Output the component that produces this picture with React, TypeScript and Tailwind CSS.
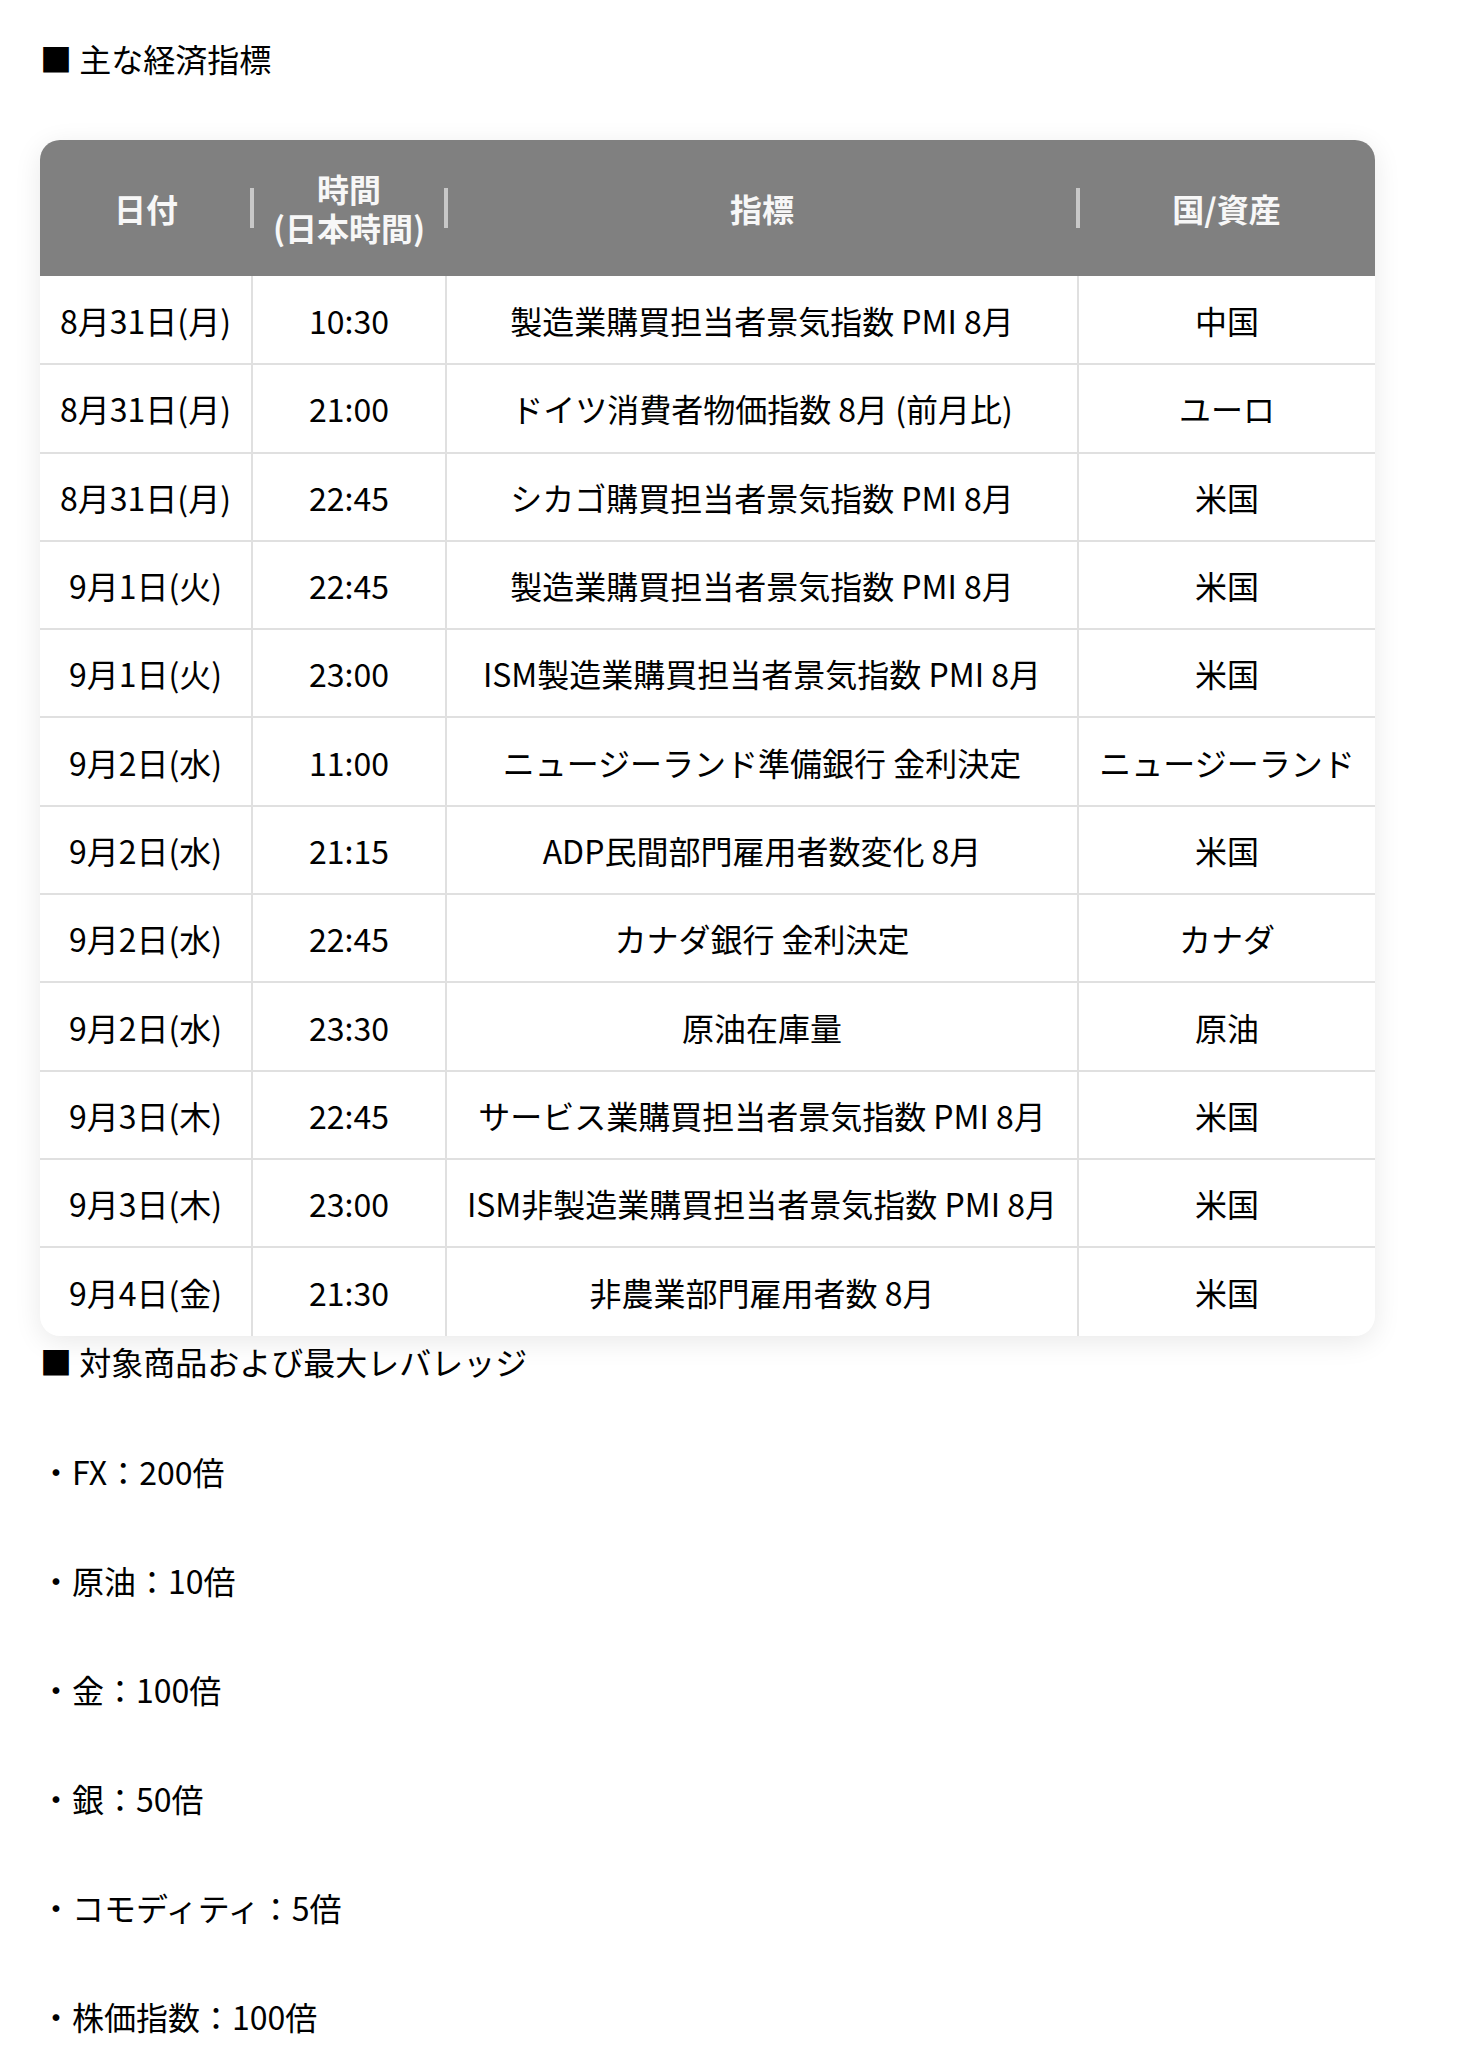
import React from "react";

const rows = [
  ["8月31日(月)", "10:30", "製造業購買担当者景気指数 PMI 8月", "中国"],
  ["8月31日(月)", "21:00", "ドイツ消費者物価指数 8月 (前月比)", "ユーロ"],
  ["8月31日(月)", "22:45", "シカゴ購買担当者景気指数 PMI 8月", "米国"],
  ["9月1日(火)", "22:45", "製造業購買担当者景気指数 PMI 8月", "米国"],
  ["9月1日(火)", "23:00", "ISM製造業購買担当者景気指数 PMI 8月", "米国"],
  ["9月2日(水)", "11:00", "ニュージーランド準備銀行 金利決定", "ニュージーランド"],
  ["9月2日(水)", "21:15", "ADP民間部門雇用者数変化 8月", "米国"],
  ["9月2日(水)", "22:45", "カナダ銀行 金利決定", "カナダ"],
  ["9月2日(水)", "23:30", "原油在庫量", "原油"],
  ["9月3日(木)", "22:45", "サービス業購買担当者景気指数 PMI 8月", "米国"],
  ["9月3日(木)", "23:00", "ISM非製造業購買担当者景気指数 PMI 8月", "米国"],
  ["9月4日(金)", "21:30", "非農業部門雇用者数 8月", "米国"],
];

const items = ["FX：200倍", "原油：10倍", "金：100倍", "銀：50倍", "コモディティ：5倍", "株価指数：100倍"];

function HeadCell({ children, bar }: { children: React.ReactNode; bar?: boolean }) {
  return (
    <th className="relative h-[136px] p-0 text-center align-middle font-bold text-[32px] leading-[39px] text-[#f7f7f7]">
      {children}
      {bar && (
        <span className="absolute right-0 top-1/2 h-[40px] w-[4px] -translate-y-1/2 translate-x-1/2 bg-[#c8c8c8]" />
      )}
    </th>
  );
}

export default function App() {
  return (
    <div
      className="min-h-[2072px] bg-white pl-[40px] pt-[34px] text-black"
      style={{ fontFamily: '"Noto Sans CJK JP", "Noto Sans", sans-serif' }}
    >
      <p className="text-[32px] leading-[48px]">■ 主な経済指標</p>

      <div className="mt-[58px] w-[1335px] overflow-hidden rounded-[20px] bg-white shadow-[0_6px_28px_rgba(0,0,0,0.09)]">
        <table className="w-full table-fixed border-collapse">
          <colgroup>
            <col className="w-[212px]" />
            <col className="w-[194px]" />
            <col className="w-[632px]" />
            <col />
          </colgroup>
          <thead className="bg-[#808080]">
            <tr>
              <HeadCell bar>日付</HeadCell>
              <HeadCell bar>
                時間
                <br />
                (日本時間)
              </HeadCell>
              <HeadCell bar>指標</HeadCell>
              <HeadCell>国/資産</HeadCell>
            </tr>
          </thead>
          <tbody>
            {rows.map((r, i) => (
              <tr key={i} className={i < rows.length - 1 ? "border-b-2 border-[#e0e0e0]" : ""}>
                {r.map((c, j) => (
                  <td
                    key={j}
                    className={
                      "h-[88.3px] p-0 text-center align-middle text-[32px] leading-[40px] " +
                      (j < 3 ? "border-r-2 border-[#e0e0e0]" : "")
                    }
                  >
                    {c}
                  </td>
                ))}
              </tr>
            ))}
          </tbody>
        </table>
      </div>

      <p className="mt-[1px] text-[32px] leading-[48px]">■ 対象商品および最大レバレッジ</p>

      <div className="mt-[62px] flex flex-col gap-[61px]">
        {items.map((t) => (
          <p key={t} className="text-[32px] leading-[48px]">
            ・{t}
          </p>
        ))}
      </div>
    </div>
  );
}
